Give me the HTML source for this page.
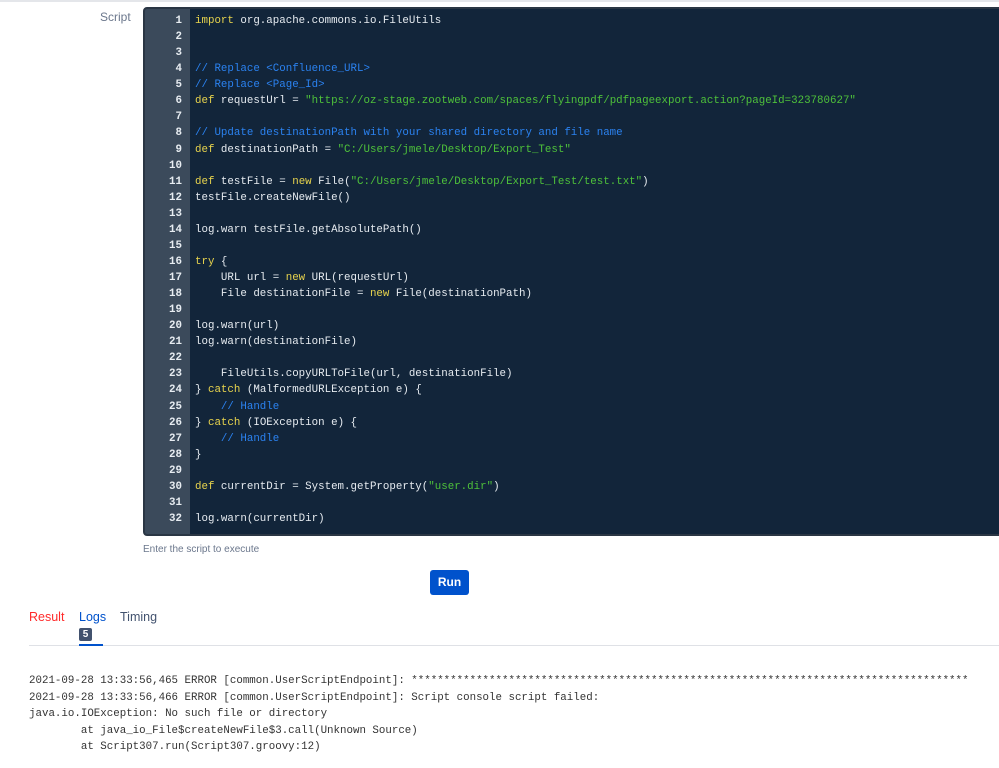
<!DOCTYPE html>
<html><head><meta charset="utf-8"><style>
body{margin:0;width:999px;height:768px;background:#fff;overflow:hidden;position:relative;font-family:"Liberation Sans",sans-serif}
.top{position:absolute;left:0;top:0;width:999px;height:2px;background:#e4e6ea}
.lbl{position:absolute;left:100px;top:10px;font-size:12px;color:#6b778c}
.ed{position:absolute;left:143px;top:7px;width:870px;height:529px;background:#12253a;border:2px solid #2a3644;border-radius:4px;box-sizing:border-box;overflow:hidden}
.gut{position:absolute;left:0;top:0;width:45px;height:100%;background:#3b4a5b}
.ln,.code{position:absolute;top:4px;font-family:"Liberation Mono",monospace;font-size:10.8px;line-height:16.06px;white-space:pre}
.ln{left:0;width:37px;text-align:right;color:#e8edf2;font-weight:bold}
.code{left:50px;color:#e6ebf0}
.k{color:#e8d44d}.c{color:#2b82f0}.s{color:#4ec13a}
.hint{position:absolute;left:143px;top:544px;font-size:10px;color:#6b778c}
.run{position:absolute;left:430px;top:570px;width:39px;height:25px;background:#0052cc;border-radius:3px;color:#fff;font-weight:bold;font-size:12px;text-align:center;line-height:25px}
.tab{position:absolute;top:610px;font-size:12.5px}
.badge{position:absolute;left:79px;top:628px;width:13px;height:13px;background:#42526e;color:#fff;font-size:10px;font-weight:bold;text-align:center;line-height:13px;border-radius:2px}
.uline{position:absolute;left:29px;top:645px;width:970px;height:1px;background:#dfe1e6}
.ul2{position:absolute;left:79px;top:644px;width:24px;height:2px;background:#0052cc}
.log{position:absolute;left:29px;top:673px;font-family:"Liberation Mono",monospace;font-size:10.8px;line-height:16.6px;white-space:pre;color:#333}
</style></head><body>
<div class="top"></div>
<div class="lbl">Script</div>
<div class="ed"><div class="gut"></div>
<div class="ln">1
2
3
4
5
6
7
8
9
10
11
12
13
14
15
16
17
18
19
20
21
22
23
24
25
26
27
28
29
30
31
32</div>
<div class="code"><span class="k">import</span> org.apache.commons.io.FileUtils


<span class="c">// Replace &lt;Confluence_URL&gt;</span>
<span class="c">// Replace &lt;Page_Id&gt;</span>
<span class="k">def</span> requestUrl = <span class="s">"https://oz-stage.zootweb.com/spaces/flyingpdf/pdfpageexport.action?pageId=323780627"</span>

<span class="c">// Update destinationPath with your shared directory and file name</span>
<span class="k">def</span> destinationPath = <span class="s">"C:/Users/jmele/Desktop/Export_Test"</span>

<span class="k">def</span> testFile = <span class="k">new</span> File(<span class="s">"C:/Users/jmele/Desktop/Export_Test/test.txt"</span>)
testFile.createNewFile()

log.warn testFile.getAbsolutePath()

<span class="k">try</span> {
    URL url = <span class="k">new</span> URL(requestUrl)
    File destinationFile = <span class="k">new</span> File(destinationPath)

log.warn(url)
log.warn(destinationFile)

    FileUtils.copyURLToFile(url, destinationFile)
} <span class="k">catch</span> (MalformedURLException e) {
    <span class="c">// Handle</span>
} <span class="k">catch</span> (IOException e) {
    <span class="c">// Handle</span>
}

<span class="k">def</span> currentDir = System.getProperty(<span class="s">"user.dir"</span>)

log.warn(currentDir)</div>
</div>
<div class="hint">Enter the script to execute</div>
<div class="run">Run</div>
<div class="tab" style="left:29px;color:#ff2a2a">Result</div>
<div class="tab" style="left:79px;color:#0052cc">Logs</div>
<div class="tab" style="left:120px;color:#42526e">Timing</div>
<div class="badge">5</div>
<div class="uline"></div><div class="ul2"></div>
<div class="log">2021-09-28 13:33:56,465 ERROR [common.UserScriptEndpoint]: **************************************************************************************
2021-09-28 13:33:56,466 ERROR [common.UserScriptEndpoint]: Script console script failed:
java.io.IOException: No such file or directory
        at java_io_File$createNewFile$3.call(Unknown Source)
        at Script307.run(Script307.groovy:12)</div>
</body></html>
